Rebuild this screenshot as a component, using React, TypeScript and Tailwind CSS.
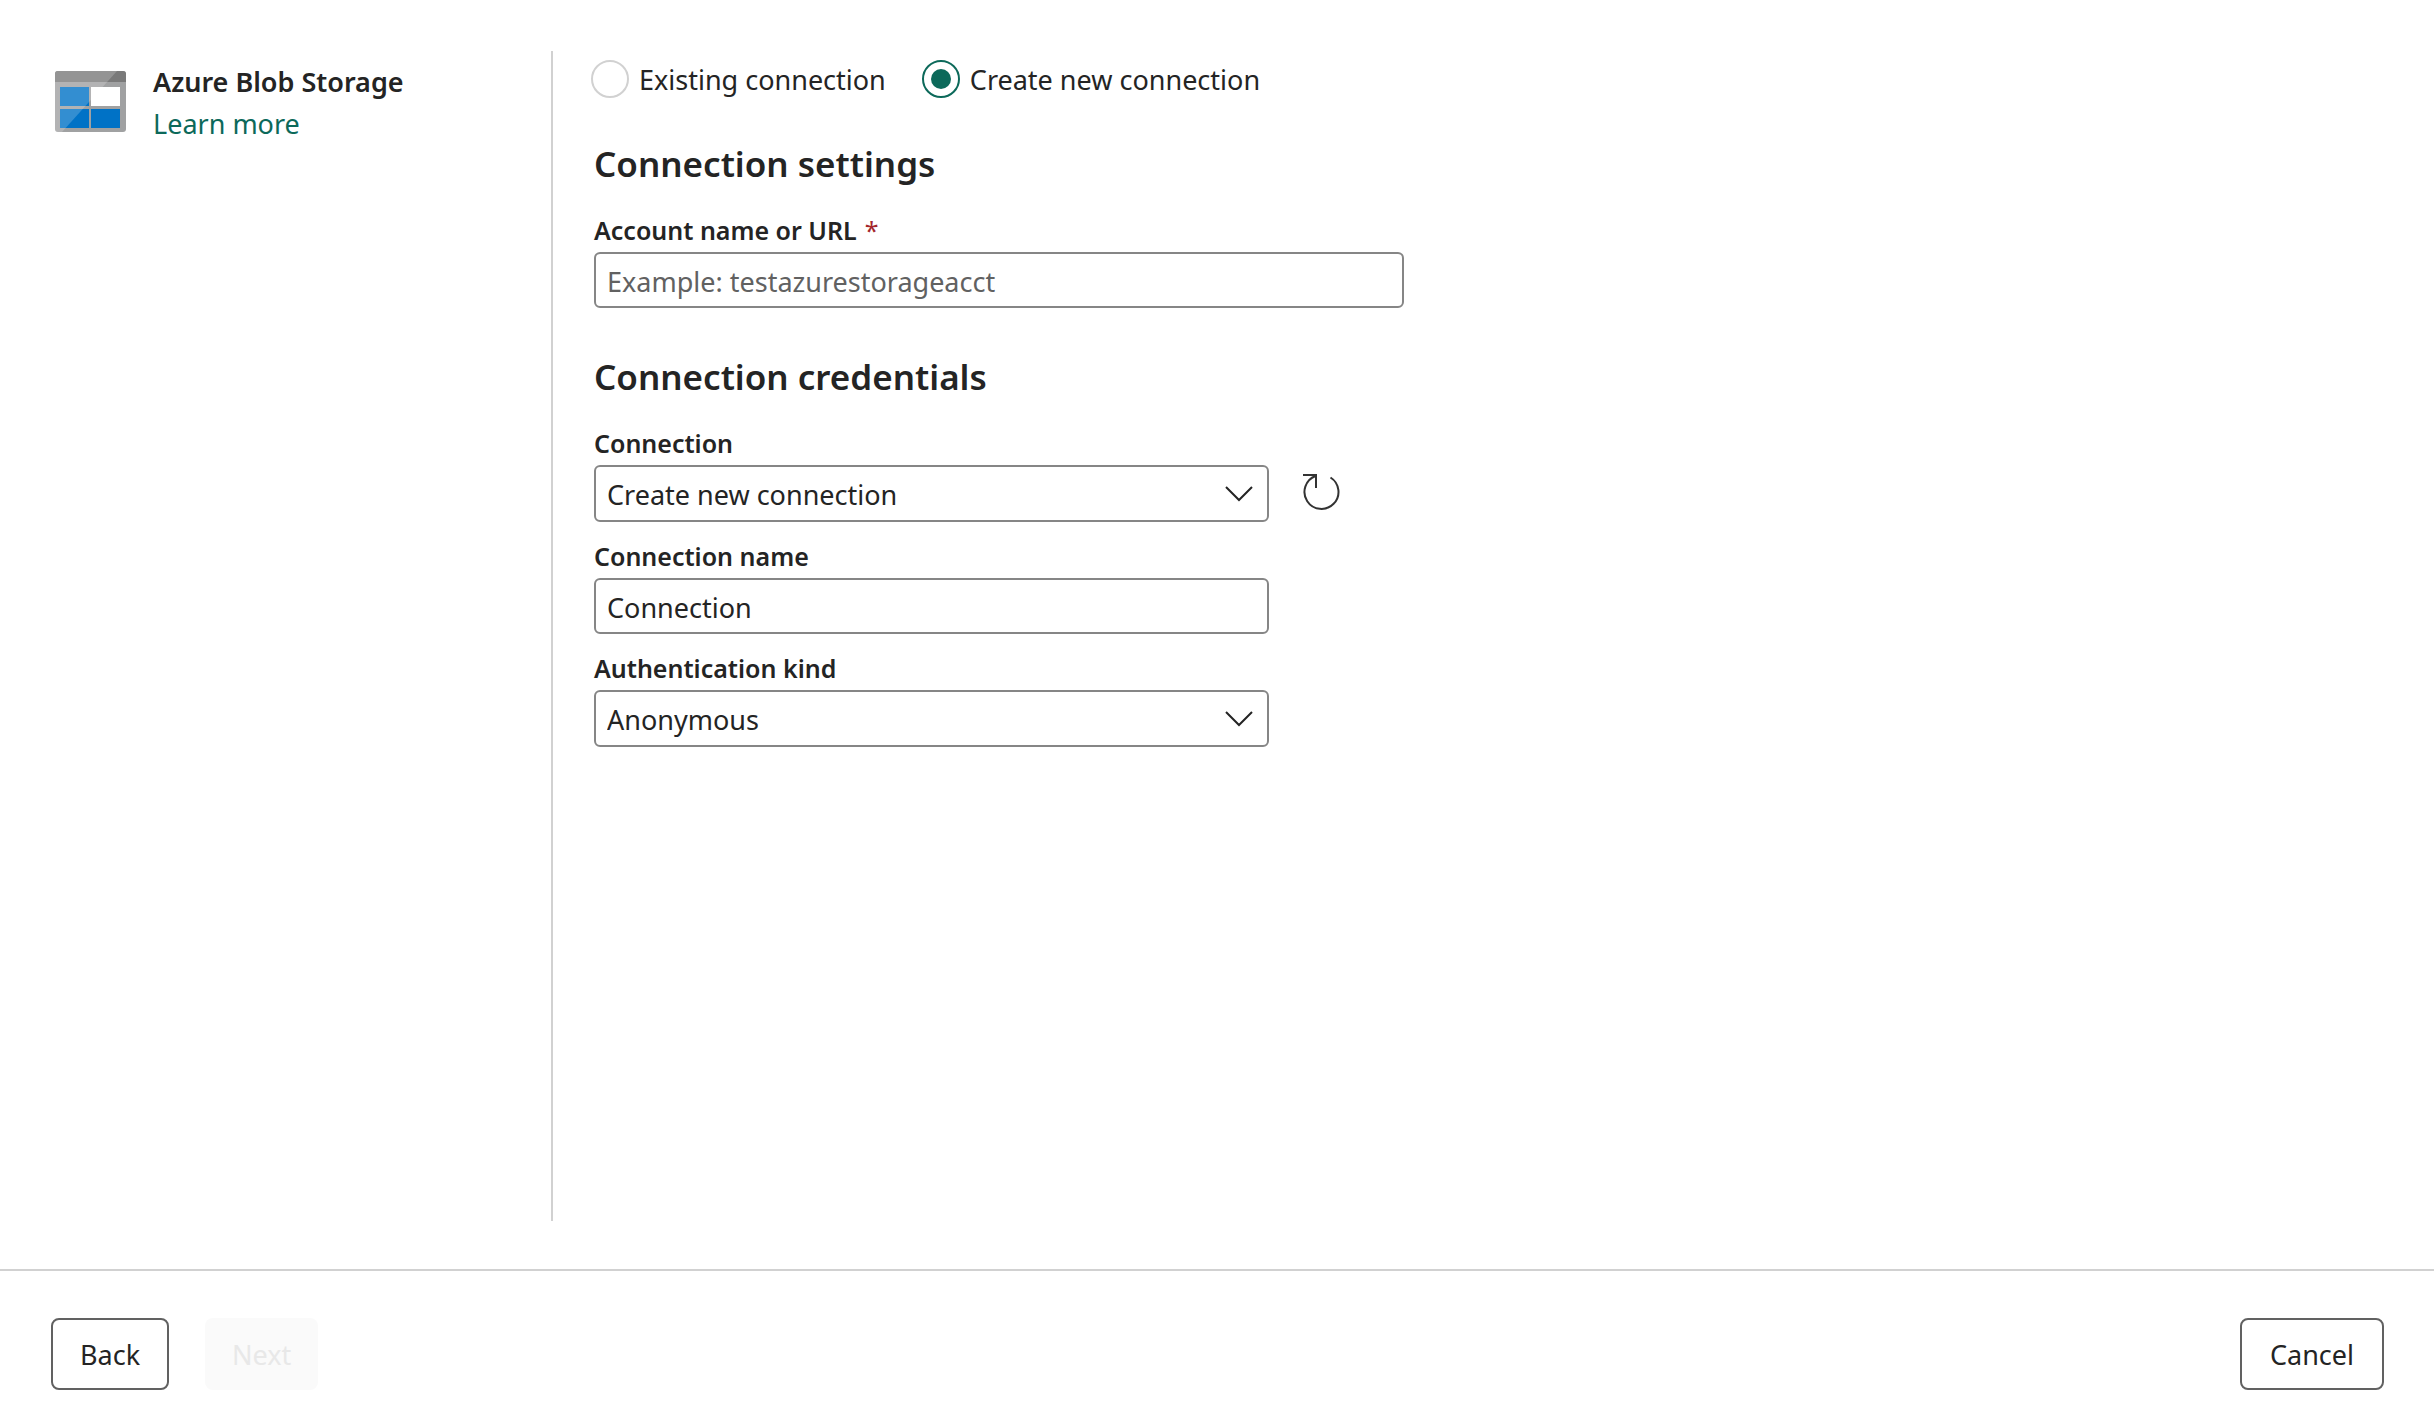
import { useState } from "react";
import type { ReactNode } from "react";

const boxClass =
  "w-full rounded-md border-2 border-[#868686] bg-white px-[11px] pt-[3px] text-[27px] text-[#242424] outline-none placeholder:text-[#616161] focus:border-[#0c695a]";

function BlobStorageLogo() {
  return (
    <svg className="h-[62px] w-[72px] shrink-0" viewBox="0 0 72 62" aria-hidden="true">
      <defs>
        <clipPath id="frame">
          <rect x="0" y="0" width="71" height="61" rx="3" />
        </clipPath>
      </defs>
      <g clipPath="url(#frame)">
        <rect width="72" height="62" fill="#a0a1a2" />
        <rect width="72" height="11" fill="#7a7a7a" />
        <rect x="5" y="16" width="29" height="19" fill="#0072c6" />
        <rect x="36" y="16" width="29" height="19" fill="#ffffff" />
        <rect x="5" y="38" width="29" height="19" fill="#0072c6" />
        <rect x="36" y="38" width="29" height="19" fill="#0072c6" />
        <path d="M0 0H62L7 61H0Z" fill="#ffffff" fillOpacity="0.2" />
      </g>
    </svg>
  );
}

function ChevronIcon() {
  return (
    <svg
      className="pointer-events-none absolute top-1/2 right-4 h-4 w-7 -translate-y-1/2"
      viewBox="0 0 28 16"
      fill="none"
      stroke="#242424"
      strokeWidth="2"
      aria-hidden="true"
    >
      <path d="M1 1L14 14L27 1" />
    </svg>
  );
}

function RefreshIcon() {
  return (
    <svg
      className="size-10"
      viewBox="0 0 40 40"
      fill="none"
      stroke="#333333"
      strokeWidth="2"
      aria-hidden="true"
    >
      <path d="M29.5 5.5A17 17 0 1 1 14.5 4" />
      <path d="M2 3H15V16" />
    </svg>
  );
}

function Radio({ label, checked, onChange }: { label: string; checked: boolean; onChange: () => void }) {
  return (
    <label className="flex items-center gap-2.5 text-[27px] leading-9">
      <input
        type="radio"
        name="mode"
        checked={checked}
        onChange={onChange}
        className="grid size-[38px] shrink-0 appearance-none place-items-center rounded-full border-2 border-[#d1d1d1] before:size-5 before:rounded-full checked:border-[#0c695a] checked:before:bg-[#0c695a]"
      />
      <span className="pt-[3px]">{label}</span>
    </label>
  );
}

function Field({ id, label, required, children }: { id: string; label: string; required?: boolean; children: ReactNode }) {
  return (
    <div className="flex flex-col gap-1">
      <label htmlFor={id} className="text-[25px] leading-9 font-semibold">
        {label}
        {required && <span className="ml-2 font-normal text-[#a4262c]">*</span>}
      </label>
      {children}
    </div>
  );
}

function Select({ id, options }: { id: string; options: string[] }) {
  return (
    <div className="relative">
      <select id={id} className={`${boxClass} h-[57px] appearance-none`}>
        {options.map((option) => (
          <option key={option}>{option}</option>
        ))}
      </select>
      <ChevronIcon />
    </div>
  );
}

export default function App() {
  const [mode, setMode] = useState("new");

  return (
    <div className="flex min-h-screen flex-col bg-white font-['Noto_Sans',sans-serif] text-[#242424]">
      <div className="flex grow py-12 pt-[51px]">
        <aside className="flex w-[553px] shrink-0 items-start gap-[26px] border-r-2 border-[#d1d1d1] pt-5 pl-[55px]">
          <BlobStorageLogo />
          <div className="-mt-2.5 text-[27px] leading-[42px]">
            <h1 className="font-semibold">Azure Blob Storage</h1>
            <a href="#learn-more" className="text-[#0c695a] hover:underline">
              Learn more
            </a>
          </div>
        </aside>

        <main className="grow pt-2 pr-12 pl-[41px]">
          <div className="-ml-[3px] flex flex-wrap gap-9" role="radiogroup" aria-label="Connection mode">
            <Radio label="Existing connection" checked={mode === "existing"} onChange={() => setMode("existing")} />
            <Radio label="Create new connection" checked={mode === "new"} onChange={() => setMode("new")} />
          </div>

          <section className="mt-[42px] max-w-[810px]">
            <h2 className="mb-6 text-[35px] leading-12 font-semibold">Connection settings</h2>
            <Field id="account" label="Account name or URL" required>
              <input id="account" required placeholder="Example: testazurestorageacct" className={`${boxClass} h-14`} />
            </Field>
          </section>

          <section className="mt-[45px] max-w-[747px]">
            <h2 className="mb-6 text-[35px] leading-12 font-semibold">Connection credentials</h2>
            <div className="grid grid-cols-[1fr_auto] gap-x-8 gap-y-4">
              <Field id="connection" label="Connection">
                <Select id="connection" options={["Create new connection"]} />
              </Field>
              <button type="button" aria-label="Refresh connections" className="mb-2.5 self-end">
                <RefreshIcon />
              </button>
              <div className="col-start-1">
                <Field id="name" label="Connection name">
                  <input id="name" defaultValue="Connection" className={`${boxClass} h-14`} />
                </Field>
              </div>
              <div className="col-start-1">
                <Field id="auth" label="Authentication kind">
                  <Select id="auth" options={["Anonymous", "Account key", "Organizational account"]} />
                </Field>
              </div>
            </div>
          </section>
        </main>
      </div>

      <footer className="flex gap-9 border-t-2 border-[#d1d1d1] pt-[47px] pr-[50px] pb-[38px] pl-[51px] text-[27px]">
        <button type="button" className="h-[72px] rounded-lg border-2 border-[#616161] px-[27px] pt-0.5">
          Back
        </button>
        <button type="button" disabled className="h-[72px] rounded-lg bg-[#fafafa] px-[27px] pt-0.5 text-[#e8e8e8]">
          Next
        </button>
        <button type="button" className="ml-auto h-[72px] rounded-lg border-2 border-[#616161] px-7 pt-0.5">
          Cancel
        </button>
      </footer>
    </div>
  );
}
